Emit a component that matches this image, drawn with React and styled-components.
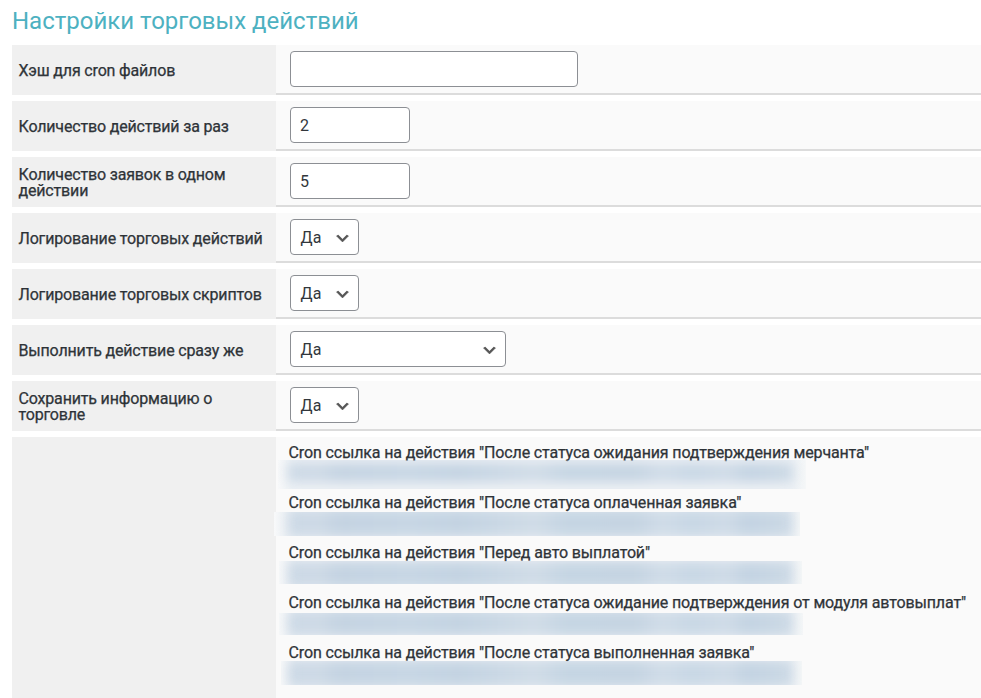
import React from 'react';
import styled, { createGlobalStyle } from 'styled-components';

const Global = createGlobalStyle`
  * { box-sizing: border-box; }
  body { margin: 0; background: #fff; overflow: hidden; font-family: Roboto, "Open Sans", sans-serif; color: #32373c; }
`;
const Page = styled.main`
  width: 981px; height: 698px; overflow: hidden; padding: 0 0 0 12px;
`;
const Title = styled.h1`
  margin: 0; height: 45px; line-height: 42px; font-size: 24px; font-weight: 400; color: #4db1c1; white-space: nowrap;
`;
const Row = styled.div`
  display: flex; height: ${p => (p.$tall ? 262 : 50)}px; margin-bottom: 6px;
`;
const Label = styled.div`
  flex: none; width: 264px; display: flex; align-items: center; padding: 2px 6px 0 6.5px;
  background: #f0f0f0; font-size: 16px; line-height: 16px; letter-spacing: -0.17px; -webkit-text-stroke: 0.25px #23282d;
`;
const Field = styled.div`
  flex: 1; padding: 6px 14px; background: #fafafa; border-bottom: 2px solid #dcdcdc;
`;
const Control = styled.div`
  width: ${p => p.$w}px; height: 36px; border: 1px solid #8c8f94; border-radius: 4px; background: #fff;
  display: flex; align-items: center; justify-content: space-between; padding: 0 7px 0 ${p => (p.$select ? 9.6 : 9)}px;
  font-size: 16px; color: #32373c;
`;
const Arrow = styled.svg`
  width: 17px; height: 17px; margin-top: 2px;
`;
const Links = styled.div`
  flex: 1; min-width: 0; background: #fafafa; padding: 4px 0 0;
`;
const Link = styled.div`
  height: 50px;
`;
const Caption = styled.div`
  height: 24px; padding-left: 12.5px; font-size: 16px; line-height: 24px; white-space: nowrap;
  letter-spacing: -0.138px; -webkit-text-stroke: 0.25px #23282d;
`;
const Redacted = styled.div`
  width: ${p => p.$w}px; height: ${p => p.$h}px; margin: ${p => p.$top}px 0 0 ${p => p.$left}px; overflow: hidden;
  background: linear-gradient(90deg, #f8f9fa, #edf1f5 14px, #edf1f5 calc(100% - 14px), #f5f7f8);
`;
const Smudge = styled.div`
  width: 505px; height: ${p => p.$h}px; margin: ${p => p.$top}px 0 0 ${p => p.$left}px;
  background: linear-gradient(90deg,
    #cbd8e5 0%, #cedae6 6%, #c4d3e2 10%, #c7d6e4 24%, #c3d3e2 34%, #d0dce7 49%, #c5d5e3 55%,
    #c5d4e2 69%, #d0dce8 74%, #c8d7e5 80%, #cfdbe7 87%, #c3d3e2 91%, #ccd9e5 100%);
  filter: blur(6px);
`;

const Chevron = () => (
  <Arrow viewBox="0 0 20 20" fill="#555"><path d="M5 6l5 5 5-5 2 1-7 7-7-7 2-1z" stroke="#555" strokeWidth="0.8" /></Arrow>
);
const rows = [
  ['Хэш для cron файлов', '', 288],
  ['Количество действий за раз', '2', 120],
  ['Количество заявок в одном действии', '5', 120],
  ['Логирование торговых действий', 'Да', 69, true],
  ['Логирование торговых скриптов', 'Да', 69, true],
  ['Выполнить действие сразу же', 'Да', 216, true],
  ['Сохранить информацию о торговле', 'Да', 69, true],
];
const links = [
  { t: 'После статуса ожидания подтверждения мерчанта', left: 2, w: 528, top: -5, h: 29, inset: 10, st: 3, sh: 19 },
  { t: 'После статуса оплаченная заявка', left: -2, w: 526, top: -3, h: 24, inset: 14, st: -3, sh: 28 },
  { t: 'Перед авто выплатой', left: 3, w: 523, top: -4, h: 23, inset: 9, st: 0, sh: 27 },
  { t: 'После статуса ожидание подтверждения от модуля автовыплат', left: 3, w: 524, top: -2, h: 22, inset: 9, st: -3, sh: 26 },
  { t: 'После статуса выполненная заявка', left: 5, w: 521, top: -4, h: 24, inset: 7, st: -1, sh: 27 },
];

export default function App() {
  return (
    <Page>
      <Global />
      <Title>Настройки торговых действий</Title>
      {rows.map(([label, value, w, select]) => (
        <Row key={label}>
          <Label>{label}</Label>
          <Field><Control $w={w} $select={select}>{value}{select && <Chevron />}</Control></Field>
        </Row>
      ))}
      <Row $tall>
        <Label />
        <Links>
          {links.map(l => (
            <Link key={l.t}>
              <Caption>Cron ссылка на действия "{l.t}"</Caption>
              <Redacted $w={l.w} $h={l.h} $left={l.left} $top={l.top}>
                <Smudge $left={l.inset} $top={l.st} $h={l.sh} />
              </Redacted>
            </Link>
          ))}
        </Links>
      </Row>
    </Page>
  );
}
